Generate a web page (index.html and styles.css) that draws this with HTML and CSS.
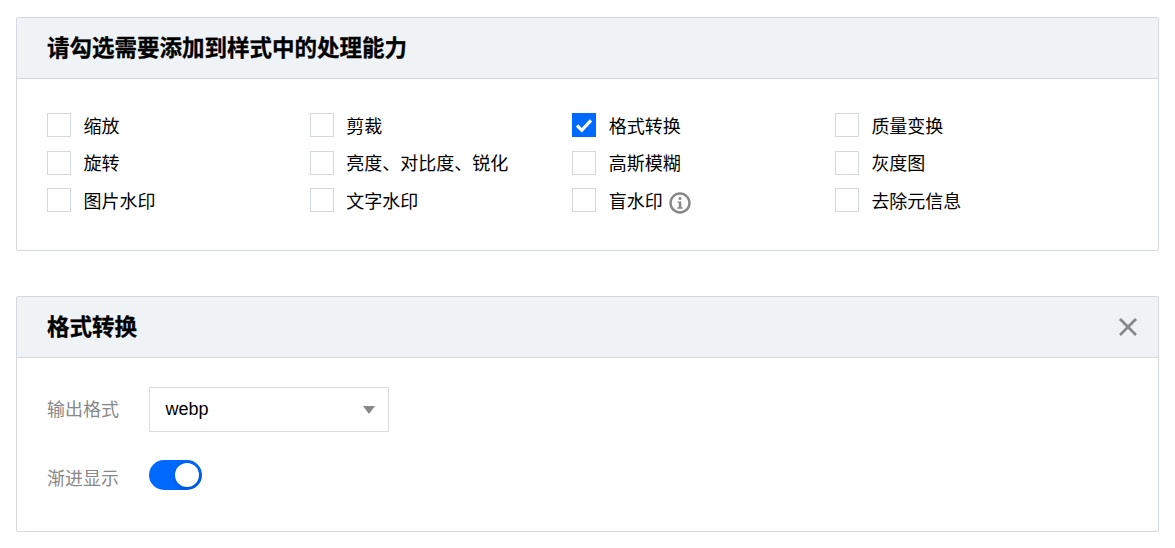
FILE: index.html
```
<!DOCTYPE html>
<html lang="zh-CN">
<head>
<meta charset="utf-8">
<title>处理能力</title>
<link rel="stylesheet" href="styles.css">
</head>
<body>
<section class="card card-abilities">
  <header class="card-head"><h2>请勾选需要添加到样式中的处理能力</h2></header>
  <div class="ability-grid">
    <label class="check"><span class="box"></span><span class="txt">缩放</span></label>
    <label class="check"><span class="box"></span><span class="txt">剪裁</span></label>
    <label class="check"><span class="box on"><svg viewBox="0 0 24 24" width="24" height="24"><path d="M5 12.500l4.800 4.800 9.200-10" fill="none" stroke="#fff" stroke-width="3.200"/></svg></span><span class="txt">格式转换</span></label>
    <label class="check"><span class="box"></span><span class="txt">质量变换</span></label>
    <label class="check"><span class="box"></span><span class="txt">旋转</span></label>
    <label class="check"><span class="box"></span><span class="txt">亮度、对比度、锐化</span></label>
    <label class="check"><span class="box"></span><span class="txt">高斯模糊</span></label>
    <label class="check"><span class="box"></span><span class="txt">灰度图</span></label>
    <label class="check"><span class="box"></span><span class="txt">图片水印</span></label>
    <label class="check"><span class="box"></span><span class="txt">文字水印</span></label>
    <label class="check"><span class="box"></span><span class="txt">盲水印</span><svg class="info" viewBox="0 0 22 22" width="22" height="22"><circle cx="11" cy="11" r="9.500" fill="none" stroke="#888" stroke-width="2.400"/><circle cx="11" cy="6.500" r="1.500" fill="#888"/><path d="M8.500 9.400h3.800v5.900h1.300v1.400h-5.200v-1.400h1.400v-4.500h-1.300z" fill="#888"/></svg></label>
    <label class="check"><span class="box"></span><span class="txt">去除元信息</span></label>
  </div>
</section>
<section class="card card-format">
  <header class="card-head">
    <h2>格式转换</h2>
    <svg class="close" viewBox="0 0 20 20" width="20" height="20"><path d="M2 2l16 16M18 2L2 18" fill="none" stroke="#888" stroke-width="2.800"/></svg>
  </header>
  <div class="form">
    <div class="form-row">
      <span class="form-label form-label-select">输出格式</span>
      <div class="select">webp<span class="caret"></span></div>
    </div>
    <div class="form-row form-row-switch">
      <span class="form-label form-label-switch">渐进显示</span>
      <span class="switch"><span class="knob"></span></span>
    </div>
  </div>
</section>
</body>
</html>
```
FILE: styles.css
```
* { box-sizing: border-box; }
html, body { margin: 0; padding: 0; background: #fff; }
body {
  padding: 17px 16px 0;
  font-family: "Liberation Sans", "Noto Sans CJK SC", sans-serif;
  font-size: 18px;
  color: #000;
  height: 548px;
  overflow: hidden;
}
.card {
  border: 1px solid #d5d8de;
  border-radius: 2px;
  width: 1143px;
  background: #fff;
}
.card-abilities { height: 234px; }
.card-format { height: 236px; margin-top: 45px; }
.card-head {
  height: 61px;
  background: #f0f3f6;
  border-bottom: 1px solid #d5d8de;
  padding: 2px 20px 0 30px;
  display: flex;
  align-items: center;
  justify-content: space-between;
}
.card-head h2 {
  margin: 0;
  font-size: 22.5px;
  font-weight: 700;
  line-height: 30px;
  -webkit-text-stroke: 0.3px #000;
}
.close { display: block; margin-top: -2px; }
.ability-grid {
  display: grid;
  grid-template-columns: repeat(4, 262.6px);
  grid-auto-rows: 37.5px;
  padding: 34px 0 0 30px;
}
.check { display: flex; align-items: flex-start; line-height: 28px; }
.txt { margin-top: -0.2px; }
.box {
  width: 24px;
  height: 24px;
  border: 1px solid #d5d8de;
  margin-right: 12.6px;
  flex: none;
  position: relative;
}
.box.on { background: #0069ff; border-color: #0069ff; }
.box.on svg { position: absolute; left: -1px; top: -1px; display: block; }
.info { margin: 4px 0 0 6px; }
.form { padding: 29px 30px 0; }
.form-row { display: flex; align-items: center; height: 45px; }
.form-row-switch { margin-top: 28px; height: 30px; }
.form-label { width: 102px; color: #888; flex: none; }
.form-label-select { padding-bottom: 4px; }
.form-label-switch { padding-top: 4px; }
.select {
  width: 240px;
  height: 45px;
  border: 1px solid #dcdcdc;
  padding-left: 15.5px;
  line-height: 43px;
  position: relative;
}
.caret {
  position: absolute;
  right: 13px;
  top: 18px;
  border-left: 6px solid transparent;
  border-right: 6px solid transparent;
  border-top: 8px solid #888;
}
.switch {
  width: 53px;
  height: 30px;
  border-radius: 15px;
  background: #0069ff;
  display: block;
  position: relative;
  overflow: hidden;
}
.knob {
  position: absolute;
  right: 3px;
  top: 3px;
  width: 24px;
  height: 24px;
  border-radius: 50%;
  background: #fff;
  box-shadow: 1px 2px 6px rgba(0, 30, 90, 0.35);
}
```
